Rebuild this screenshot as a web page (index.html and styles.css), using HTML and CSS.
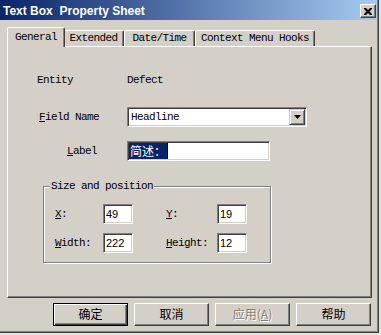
FILE: index.html
```html
<!DOCTYPE html>
<html lang="en">
<head>
    <meta charset="UTF-8">
    <title>Text Box Property Sheet</title>
    <link rel="stylesheet" href="styles.css">
</head>
<body>
    <div class="window">
        <!-- Title bar -->
        <div class="titlebar">
            <span class="title">Text Box&nbsp; Property Sheet</span>
            <div class="close">
                <svg width="8" height="7" viewBox="0 0 8 7">
                    <path d="M0 0h2l2 2 2-2h2v1l-2.5 2.5L8 6v1H6L4 5 2 7H0V6l2.5-2.5L0 1z" fill="#000"/>
                </svg>
            </div>
        </div>

        <!-- Tabs -->
        <div class="tabs">
            <div class="tab active t-general">General</div>
            <div class="tab t-extended">Extended</div>
            <div class="tab t-date">Date/Time</div>
            <div class="tab t-hooks">Context Menu Hooks</div>
        </div>

        <!-- Page -->
        <div class="panel">
            <div class="row r-entity">
                <div class="lbl">Entity</div>
                <div class="val">Defect</div>
            </div>
            <div class="row r-field">
                <div class="lbl lbl-field"><u>F</u>ield Name</div>
                <div class="combo">
                    <span class="combo-text">Headline</span>
                    <div class="drop">
                        <svg width="7" height="4" viewBox="0 0 7 4"><path d="M0 0h7L3.5 4z" fill="#000"/></svg>
                    </div>
                </div>
            </div>
            <div class="row r-label">
                <div class="lbl lbl-label"><u>L</u>abel</div>
                <div class="edit label-edit"><span class="sel">简述：</span><span class="caret"></span></div>
            </div>

            <fieldset class="group">
                <legend>Size and position</legend>
                <div class="pos-grid">
                    <div class="lbl"><u>X</u>:</div>
                    <div class="edit num">49</div>
                    <div></div>
                    <div class="lbl"><u>Y</u>:</div>
                    <div class="edit num">19</div>

                    <div class="lbl"><u>W</u>idth:</div>
                    <div class="edit num">222</div>
                    <div></div>
                    <div class="lbl"><u>H</u>eight:</div>
                    <div class="edit num">12</div>
                </div>
            </fieldset>
        </div>

        <!-- Dialog buttons -->
        <div class="buttons">
            <div class="btn default">确定</div>
            <div class="btn">取消</div>
            <div class="btn disabled">应用(<u>A</u>)</div>
            <div class="btn">帮助</div>
        </div>
    </div>
</body>
</html>
```

FILE: styles.css
```css
/* General styles */
body {
    margin: 0;
    background-color: #e4e2dc;
    font-family: "Liberation Mono", monospace;
    font-size: 11px;
    letter-spacing: -0.6px;
    color: #000;
}
u {
    text-underline-offset: 1px;
}
.window {
    width: 379px;
    height: 333px;
    box-sizing: border-box;
    background-color: #d4d0c8;
    border-right: 1px solid #404040;
    border-bottom: 1px solid #404040;
    box-shadow: inset -1px -1px 0 #808080;
    display: flex;
    flex-direction: column;
}

/* Title bar */
.titlebar {
    height: 20px;
    margin-right: 1px;
    padding: 0 1px 0 3px;
    background: linear-gradient(to right, #0a246a, #a6caf0);
    display: flex;
    align-items: flex-start;
    justify-content: space-between;
}
.title {
    font-family: "Liberation Sans", Arial, sans-serif;
    font-weight: bold;
    font-size: 12px;
    letter-spacing: 0;
    color: #fff;
    line-height: 20px;
    padding-top: 1px;
}
.close {
    width: 16px;
    height: 14px;
    margin-top: 4px;
    box-sizing: border-box;
    background-color: #d4d0c8;
    border-top: 1px solid #fff;
    border-left: 1px solid #fff;
    border-right: 1px solid #404040;
    border-bottom: 1px solid #404040;
    box-shadow: inset -1px -1px 0 #808080;
    display: flex;
    align-items: center;
    justify-content: center;
}

/* Tabs */
.tabs {
    display: flex;
    align-items: flex-end;
    height: 16px;
    margin-top: 10px;
    padding-left: 9px;
}
.tab {
    height: 16px;
    box-sizing: border-box;
    border-top: 1px solid #fff;
    border-left: 1px solid #fff;
    border-right: 1px solid #404040;
    border-radius: 2px 2px 0 0;
    box-shadow: inset -1px 0 0 #808080;
    line-height: 14px;
    text-align: center;
    background-color: #d4d0c8;
}
.t-general { width: 54px; }
.t-extended { width: 61px; }
.t-date { width: 71px; }
.t-hooks { width: 120px; }
.tab.active {
    position: relative;
    z-index: 1;
    height: 20px;
    width: 58px;
    margin: 0 -2px -1px;
    padding-top: 2px;
}

/* Property page */
.panel {
    margin-left: 7px;
    width: 365px;
    height: 252px;
    box-sizing: border-box;
    border-top: 1px solid #fff;
    border-left: 1px solid #fff;
    border-right: 1px solid #404040;
    border-bottom: 1px solid #404040;
    box-shadow: inset -1px -1px 0 #808080;
    padding-top: 23px;
}
.row {
    display: flex;
    align-items: center;
    height: 20px;
    padding-left: 29px;
}
.r-field { margin-top: 17px; }
.r-label { margin-top: 14px; }
.row .lbl {
    width: 90px;
    box-sizing: border-box;
}
.lbl-field { padding-left: 2px; }
.lbl-label { padding-left: 30px; }

/* Sunken fields */
.edit, .combo {
    box-sizing: border-box;
    height: 20px;
    background-color: #fff;
    border-top: 1px solid #808080;
    border-left: 1px solid #808080;
    border-right: 1px solid #fff;
    border-bottom: 1px solid #fff;
    box-shadow: inset 1px 1px 0 #404040, inset -1px -1px 0 #d4d0c8;
}
.combo {
    width: 180px;
    display: flex;
    align-items: center;
    justify-content: space-between;
    padding: 0 1px 0 3px;
}
.drop {
    width: 16px;
    height: 16px;
    box-sizing: border-box;
    background-color: #d4d0c8;
    border-top: 1px solid #d4d0c8;
    border-left: 1px solid #d4d0c8;
    border-right: 1px solid #404040;
    border-bottom: 1px solid #404040;
    box-shadow: inset 1px 1px 0 #fff, inset -1px -1px 0 #808080;
    display: flex;
    align-items: center;
    justify-content: center;
}
.label-edit {
    width: 143px;
    padding: 1px;
    display: flex;
}
.sel {
    font-family: "Noto Sans CJK SC", sans-serif;
    font-size: 12px;
    letter-spacing: 0;
    line-height: 16px;
    height: 16px;
    padding: 0 1px 0 1px;
    background-color: #0a246a;
    color: #fff;
}
.caret {
    width: 1px;
    height: 16px;
    background-color: #000;
}

/* Size and position group */
.group {
    margin: 19px 0 0 35px;
    width: 228px;
    box-sizing: border-box;
    padding: 0 0 9px 6px;
    border: 1px solid #808080;
    box-shadow: 1px 1px 0 #fff, inset 1px 1px 0 #fff;
}
.group legend {
    padding: 0 1px;
    line-height: 12px;
    background-color: #d4d0c8;
}
.pos-grid {
    display: grid;
    grid-template-columns: 48px 30px 33px 51px 30px;
    grid-template-rows: 20px 20px;
    row-gap: 9px;
    align-items: center;
    margin: 12px 0 0 5px;
}
.num {
    font-family: "Liberation Sans", Arial, sans-serif;
    font-size: 11px;
    letter-spacing: 0;
    line-height: 18px;
    padding-left: 2px;
}

/* Buttons */
.buttons {
    display: flex;
    gap: 6px;
    margin-top: 5px;
    padding-left: 53px;
}
.btn {
    width: 75px;
    height: 23px;
    box-sizing: border-box;
    border-top: 1px solid #fff;
    border-left: 1px solid #fff;
    border-right: 1px solid #404040;
    border-bottom: 1px solid #404040;
    box-shadow: inset -1px -1px 0 #808080;
    font-family: "Noto Sans CJK SC", sans-serif;
    font-size: 12px;
    letter-spacing: 0;
    line-height: 20px;
    text-align: center;
}
.btn.default {
    border: 1px solid #000;
    box-shadow: inset 1px 1px 0 #fff, inset -1px -1px 0 #404040, inset -2px -2px 0 #808080;
}
.btn.disabled {
    color: #808080;
    text-shadow: 1px 1px 0 #fff;
}
```
